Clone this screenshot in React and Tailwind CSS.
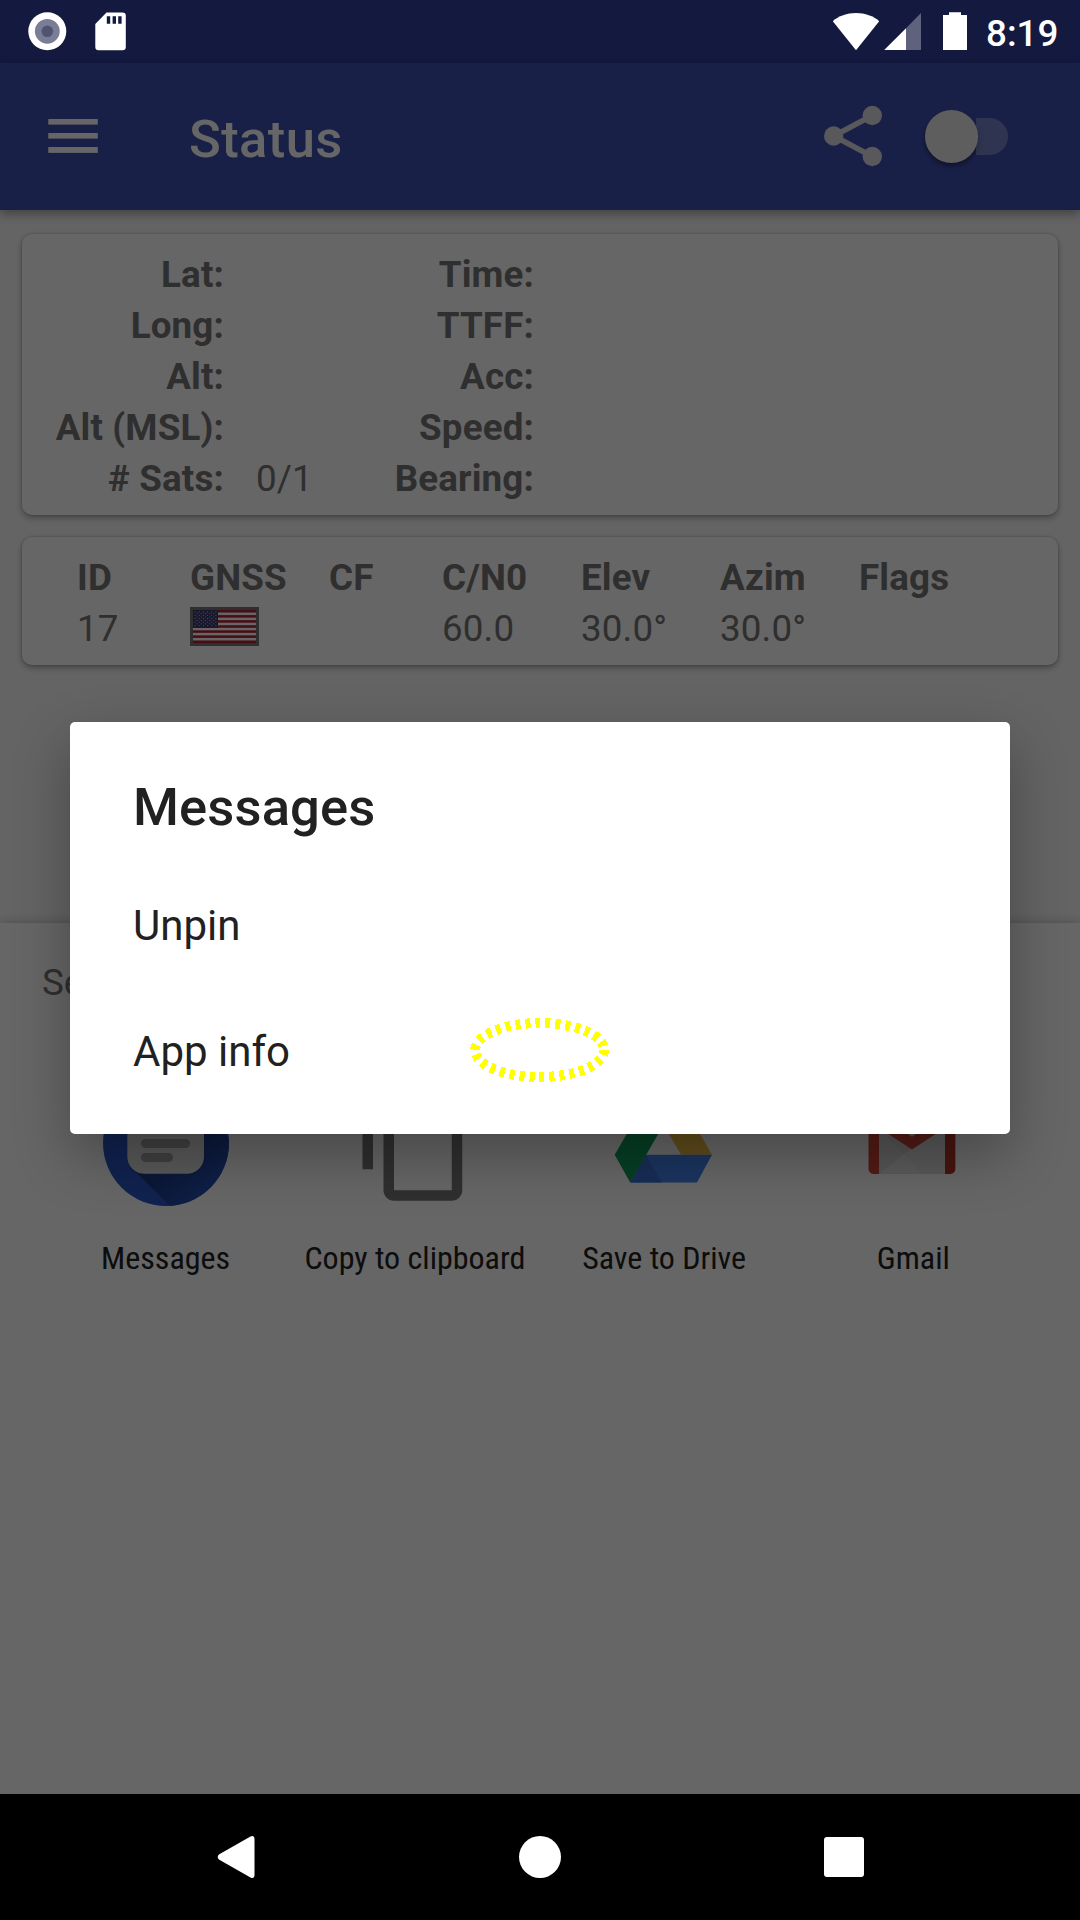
import React from "react";
import { MdContentCopy } from "react-icons/md";

const FIX_LEFT = ["Lat:", "Long:", "Alt:", "Alt (MSL):", "# Sats:"];
const FIX_LEFT_VALUES = ["", "", "", "", "0/1"];
const FIX_RIGHT = ["Time:", "TTFF:", "Acc:", "Speed:", "Bearing:"];

function StatusBar() {
  return (
    <div className="h-[63px] bg-[#303f9f]">
      <div className="relative z-20 flex h-full items-start">
        <svg className="ml-7 mt-3 h-10 w-10 shrink-0" viewBox="28 12 40 40">
          <circle cx="47.3" cy="31.3" r="19" fill="#fff" />
          <circle cx="47.3" cy="31.3" r="12.4" fill="#7b7d96" />
          <circle cx="47.3" cy="31.3" r="5.8" fill="#505372" />
        </svg>
        <svg className="ml-[26px] mt-3 h-10 w-9 shrink-0" viewBox="94 12 36 40">
          <path
            fill="#fff"
            fillRule="evenodd"
            d="M106.5 12.5H122.5a3.3 3.3 0 0 1 3.3 3.3V47a3.3 3.3 0 0 1-3.3 3.3H98.6A3.3 3.3 0 0 1 95.3 47V24zM106.8 16.2v7.6h3.4v-7.6zM112.6 16.2v7.6h3.4v-7.6zM118.2 16.2v7.6h3.4v-7.6z"
          />
        </svg>
        <svg className="ml-auto mt-3 h-10 w-[140px] shrink-0" viewBox="830 12 140 40">
          <path fill="#fff" d="M856 50.2L832.8 21.2C838.5 16 847 13 856 13S873.500 16 879.200 21.2z" />
          <path fill="#fff" fillOpacity=".32" d="M906 28.300L921 13V50H906z" />
          <path fill="#fff" d="M884.2 50L906 28.300V50z" />
          <path fill="#fff" d="M949 12.2h12V15h6V50h-24V15h6z" />
        </svg>
        <span className="ml-4 mr-[22px] w-[72px] pt-0.5 text-[36.75px] font-medium leading-[63px] text-white">8:19</span>
      </div>
    </div>
  );
}

function AppBar() {
  return (
    <header className="relative flex h-[147px] items-center bg-[#3f51b5] shadow-[0_4px_10px_rgba(0,0,0,0.35)]">
      <svg className="ml-12 h-9 w-[50px]" viewBox="48 119 50 36" fill="#fff">
        <rect x="48.300" y="119" width="49.500" height="5.600" />
        <rect x="48.300" y="133" width="49.500" height="5.600" />
        <rect x="48.300" y="147" width="49.500" height="5.900" />
      </svg>
      <h1 className="ml-[91px] pt-1 text-[52.5px] font-medium leading-[62px] tracking-[0.4px] text-white">Status</h1>
      <svg className="ml-auto h-16 w-[60px]" viewBox="822 105 60 64">
        <g fill="#dedee4" stroke="#dedee4">
          <path d="M872.3 115.500L833.700 136L872.3 156.500" fill="none" strokeWidth="5.400" />
          <g stroke="none">
            <circle cx="872.3" cy="115.500" r="9.700" />
            <circle cx="833.700" cy="136" r="9.700" />
            <circle cx="872.3" cy="156.500" r="9.700" />
          </g>
        </g>
      </svg>
      <div className="ml-[43px] mr-[72px] flex h-[53px] w-[83px] items-center">
        <div className="h-[53px] w-[53px] shrink-0 rounded-full bg-[#ececec] shadow-[0_3px_5px_rgba(0,0,0,0.45)]" />
        <div className="-ml-[30px] h-[37px] w-[60px] shrink-0 rounded-full bg-white/28 [clip-path:inset(0_0_0_28px)]" />
      </div>
    </header>
  );
}

function Card({ className, children }) {
  return (
    <section
      className={
        "rounded-[10px] bg-white pt-[15px] text-[36.75px] leading-[51px] tracking-[0.15px] text-[#757575] shadow-[0_3px_6px_rgba(0,0,0,0.3),0_0_3px_rgba(0,0,0,0.2)] " +
        className
      }
    >
      {children}
    </section>
  );
}

function FixCard() {
  return (
    <Card className="h-[281px]">
      <div className="flex">
        <div className="w-[202px] text-right font-bold">
          {FIX_LEFT.map((t) => (
            <div key={t} className="whitespace-nowrap">{t}</div>
          ))}
        </div>
        <div className="ml-8 w-[120px]">
          {FIX_LEFT_VALUES.map((t, i) => (
            <div key={i} className="h-[51px]">{t}</div>
          ))}
        </div>
        <div className="w-[158px] text-right font-bold">
          {FIX_RIGHT.map((t) => (
            <div key={t}>{t}</div>
          ))}
        </div>
      </div>
    </Card>
  );
}

function Flag() {
  const stars = [];
  for (let r = 0; r < 9; r++) {
    for (let c = r % 2; c < 11; c += 2) {
      stars.push(<circle key={r + "-" + c} cx={5.1 + c * 2.08} cy={4.900 + r * 1.7} r="0.600" fill="#fff" fillOpacity=".7" />);
    }
  }
  return (
    <svg className="mt-1 h-[39px] w-[69px]" viewBox="0 0 69 39">
      <rect width="69" height="39" fill="#757575" />
      <rect x="3" y="3" width="63" height="33" fill="#fff" />
      {[0, 1, 2, 3, 4, 5, 6].map((i) => (
        <rect key={i} x="3" y={3 + (i * 66) / 13} width="63" height={33 / 13} fill="#b22234" />
      ))}
      <rect x="3" y="3" width="25" height="17.770" fill="#3c3b6e" />
      {stars}
    </svg>
  );
}

function SatelliteCard() {
  return (
    <Card className="mt-[22px] h-[128px] pl-[55px]">
      <div className="grid grid-cols-[113px_139px_113px_139px_139px_139px_139px] font-bold">
        <span>ID</span>
        <span>GNSS</span>
        <span>CF</span>
        <span>C/N0</span>
        <span>Elev</span>
        <span>Azim</span>
        <span>Flags</span>
      </div>
      <div className="grid grid-cols-[113px_139px_113px_139px_139px_139px_139px]">
        <span>17</span>
        <Flag />
        <span />
        <span>60.0</span>
        <span>30.0°</span>
        <span>30.0°</span>
        <span />
      </div>
    </Card>
  );
}

function MessagesIcon() {
  return (
    <svg className="h-[126px] w-[126px]" viewBox="0 0 126 126">
      <defs>
        <clipPath id="disc">
          <circle cx="63" cy="63" r="63" />
        </clipPath>
        <linearGradient id="castShadow" gradientUnits="userSpaceOnUse" x1="75" y1="75" x2="112" y2="112">
          <stop offset="0" stopColor="#1a3a86" />
          <stop offset="1" stopColor="#2750b8" />
        </linearGradient>
      </defs>
      <g clipPath="url(#disc)">
        <rect width="126" height="126" fill="#2a56c6" />
        <path d="M29 88L67 126H126V58L96 28V80z" fill="url(#castShadow)" />
      </g>
      <rect x="24.300" y="32" width="77" height="63" rx="17" fill="#193a88" fillOpacity=".6" />
      <rect x="24.300" y="30" width="76.700" height="63.700" rx="17" fill="#dfdfdf" />
      <rect x="38" y="59" width="49" height="9" rx="4.500" fill="#a0a0a0" />
      <rect x="38" y="73" width="32" height="9" rx="4.500" fill="#a0a0a0" />
    </svg>
  );
}

function DriveIcon() {
  return (
    <svg className="h-[126px] w-[126px]" viewBox="601.300 1080 126 126">
      <path d="M648 1097.500H679.700L712.300 1154.700H681.300z" fill="#f0bf44" />
      <path d="M646.300 1154.700H712.300L697.300 1182.400H630.500z" fill="#4485f0" />
      <path d="M646.300 1154.700L662 1182.400H630.500z" fill="#3c72d6" />
      <path d="M615 1154.700L648 1097.500L663.700 1125L630.500 1182.400z" fill="#0f9d5a" />
    </svg>
  );
}

function GmailIcon() {
  return (
    <svg className="h-[126px] w-[126px]" viewBox="850.700 1080 126 126">
      <rect x="869.300" y="1109" width="86.700" height="65" rx="5" fill="#d8d8d8" />
      <path d="M880 1173.800L905 1154L922 1173.800z" fill="#e4e4e4" />
      <path d="M905 1154L922 1173.800H946V1128H930z" fill="#dedede" />
      <path d="M879.700 1128L905 1154L912 1149z" fill="#cfcfcf" />
      <path d="M874.300 1109H879.700V1174H874.300a5 5 0 0 1-5-5V1114a5 5 0 0 1 5-5z" fill="#cf4436" />
      <path d="M951 1109H945.700V1174H951a5 5 0 0 0 5-5V1114a5 5 0 0 0-5-5z" fill="#b5352a" />
      <path d="M869.300 1114V1121L912.700 1149.400L956 1121V1114L951 1109L912.700 1136.700L874 1109z" fill="#cf4436" />
    </svg>
  );
}

function ShareTarget({ icon, label }) {
  return (
    <div className="flex flex-col items-center">
      {icon}
      <span className="mt-[33px] whitespace-nowrap text-[32px] leading-[38px] text-[#212121] [font-stretch:75%]">{label}</span>
    </div>
  );
}

function ShareSheet() {
  return (
    <div className="absolute inset-x-0 top-[923px] h-[871px] bg-white px-[41px] pt-[38px] shadow-[0_0_10px_rgba(0,0,0,0.25)]">
      <p className="ml-px text-[36.75px] leading-[44px] text-[#757575]">Select an action</p>
      <div className="mt-[75px] grid w-[997px] grid-cols-4">
        <ShareTarget icon={<MessagesIcon />} label="Messages" />
        <ShareTarget icon={<MdContentCopy className="h-[126px] w-[126px] text-[#757575]" />} label="Copy to clipboard" />
        <ShareTarget icon={<DriveIcon />} label="Save to Drive" />
        <ShareTarget icon={<GmailIcon />} label="Gmail" />
      </div>
    </div>
  );
}

function Dialog() {
  return (
    <div className="absolute left-[70px] top-[722px] z-20 h-[412px] w-[940px] rounded-[5px] bg-white pt-[54px] text-[#212121] shadow-[0_22px_56px_rgba(0,0,0,0.3)]">
      <h2 className="px-[63px] text-[52.5px] font-medium leading-[62px] tracking-[0.15px]">Messages</h2>
      <div className="mt-[25px] flex flex-col text-[42px] leading-[126px]">
        <button className="px-[63px] text-left">Unpin</button>
        <button className="px-[63px] text-left">App info</button>
      </div>
      <svg className="absolute left-[399px] top-[295px] h-[66px] w-[142px]" viewBox="469 1017 142 66" shapeRendering="crispEdges">
        <ellipse cx="539.700" cy="1050" rx="64.500" ry="27" fill="none" stroke="#ff0" strokeWidth="10" strokeDasharray="5 5" />
      </svg>
    </div>
  );
}

function NavBar() {
  return (
    <nav className="relative z-20 flex h-[126px] items-center bg-black">
      <svg className="ml-[215px] h-[46px] w-[42px]" viewBox="215 1834 42 46">
        <path d="M250.500 1836.600C252.600 1835.200 254.500 1836.300 254.500 1839V1875C254.500 1877.700 252.600 1878.800 250.500 1877.400L219.300 1859.700C217.200 1858.300 217.200 1855.700 219.300 1854.300z" fill="#fff" />
      </svg>
      <div className="ml-[262px] h-[42px] w-[42px] rounded-full bg-white" />
      <div className="ml-[263px] h-10 w-10 rounded-[3px] bg-white" />
    </nav>
  );
}

export default function App() {
  return (
    <div className="relative flex h-[1920px] w-[1080px] flex-col overflow-hidden bg-[#fafafa] font-['Roboto',sans-serif]">
      <StatusBar />
      <AppBar />
      <main className="flex-1 px-[22px] pt-6">
        <FixCard />
        <SatelliteCard />
      </main>
      <ShareSheet />
      <div className="absolute inset-0 z-10 bg-black/60" />
      <Dialog />
      <NavBar />
    </div>
  );
}
